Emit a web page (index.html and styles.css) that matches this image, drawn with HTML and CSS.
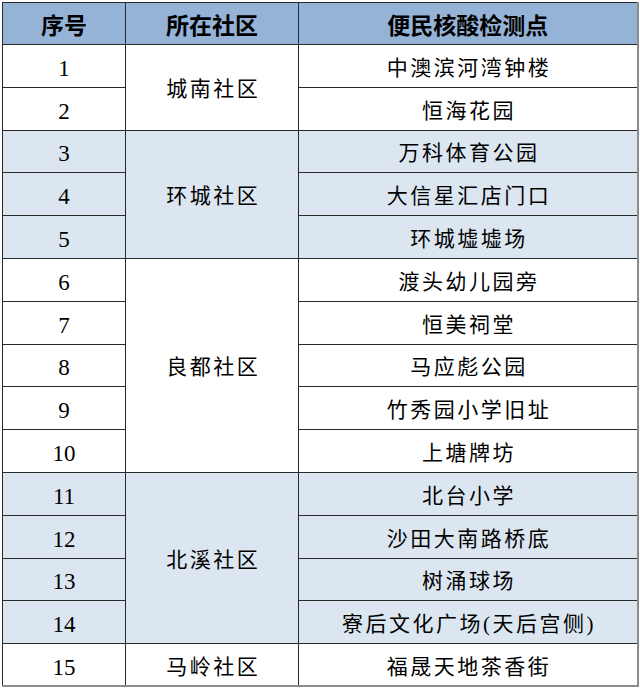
FILE: index.html
```html
<!DOCTYPE html>
<html lang="zh-CN">
<head>
<meta charset="utf-8">
<title>便民核酸检测点</title>
<link rel="stylesheet" href="styles.css">
</head>
<body>
<table class="sites">
  <colgroup>
    <col class="c-num">
    <col class="c-comm">
    <col class="c-site">
  </colgroup>
  <thead>
    <tr class="head">
      <th>序号</th>
      <th>所在社区</th>
      <th>便民核酸检测点</th>
    </tr>
  </thead>
  <tbody class="plain">
    <tr><td class="num">1</td><td class="comm" rowspan="2">城南社区</td><td class="site">中澳滨河湾钟楼</td></tr>
    <tr><td class="num">2</td><td class="site">恒海花园</td></tr>
  </tbody>
  <tbody class="tint">
    <tr><td class="num">3</td><td class="comm" rowspan="3">环城社区</td><td class="site">万科体育公园</td></tr>
    <tr><td class="num">4</td><td class="site">大信星汇店门口</td></tr>
    <tr><td class="num">5</td><td class="site">环城墟墟场</td></tr>
  </tbody>
  <tbody class="plain">
    <tr><td class="num">6</td><td class="comm" rowspan="5">良都社区</td><td class="site">渡头幼儿园旁</td></tr>
    <tr><td class="num">7</td><td class="site">恒美祠堂</td></tr>
    <tr><td class="num">8</td><td class="site">马应彪公园</td></tr>
    <tr><td class="num">9</td><td class="site">竹秀园小学旧址</td></tr>
    <tr><td class="num">10</td><td class="site">上塘牌坊</td></tr>
  </tbody>
  <tbody class="tint">
    <tr><td class="num">11</td><td class="comm" rowspan="4">北溪社区</td><td class="site">北台小学</td></tr>
    <tr><td class="num">12</td><td class="site">沙田大南路桥底</td></tr>
    <tr><td class="num">13</td><td class="site">树涌球场</td></tr>
    <tr><td class="num">14</td><td class="site">寮后文化广场(天后宫侧)</td></tr>
  </tbody>
  <tbody class="plain">
    <tr><td class="num">15</td><td class="comm">马岭社区</td><td class="site">福晟天地茶香街</td></tr>
  </tbody>
</table>
</body>
</html>
```

FILE: styles.css
```css
html, body {
  margin: 0;
  padding: 0;
  background: #ffffff;
}

body {
  padding: 2px 0 0 2px;
}

.sites {
  width: 635px;
  table-layout: fixed;
  border-collapse: collapse;
  border-top: 1px solid #8c8c8c;
  border-left: 1px solid #8c8c8c;
  border-right: 2px solid #8c8c8c;
  border-bottom: 2px solid #8c8c8c;
  color: #000;
  font-family: "Liberation Serif", "Noto Sans CJK SC", serif;
}

.c-num { width: 123px; }
.c-comm { width: 173px; }
.c-site { width: 339px; }

.sites th,
.sites td {
  border: 1px solid #2a2a2a;
  text-align: center;
  vertical-align: middle;
  padding: 5px 0 0 0;
  line-height: 1;
}

.head {
  height: 42px;
  background: #95b3d7;
}

.head th {
  font-family: "Noto Sans CJK SC", sans-serif;
  font-weight: 700;
  font-size: 23px;
  padding-top: 2px;
}

.sites tbody tr {
  height: 42.8px;
}

.plain { background: #ffffff; }
.tint { background: #dce6f1; }

.num {
  font-size: 23px;
}

.comm,
.site {
  font-size: 21px;
  letter-spacing: 2.5px;
  text-indent: 2.5px;
}

.sites tbody tr + tr td {
  border-top-color: #555555;
}
```
